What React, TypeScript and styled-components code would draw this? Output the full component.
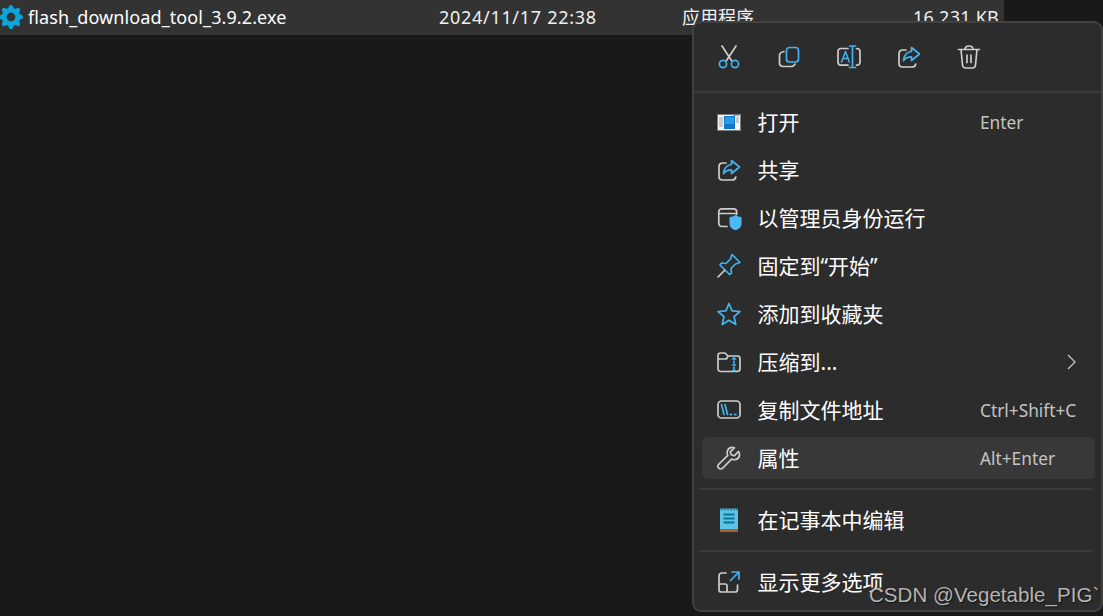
import React from "react";
import styled, { createGlobalStyle } from "styled-components";
import { BsGearFill } from "react-icons/bs";

const ACCENT = "#41b4f0";
const LINE = "#cdcdcd";

const GlobalStyle = createGlobalStyle`
  html, body {
    margin: 0;
    padding: 0;
    height: 100%;
    background: #191919;
    overflow: hidden;
  }
  #root {
    height: 100%;
  }
`;

const Page = styled.div`
  position: relative;
  width: 1103px;
  height: 616px;
  background: #191919;
  color: #fff;
  font-family: "Noto Sans", "Noto Sans CJK SC", sans-serif;
  overflow: hidden;
`;

const FileRow = styled.div`
  display: grid;
  grid-template-columns: 439px 243px 1fr;
  align-items: center;
  width: 1004px;
  height: 35px;
  box-sizing: border-box;
  padding-right: 5px;
  background: #333333;
  font-size: 18px;
  line-height: 35px;
  color: #f0f0f0;
`;

const FileName = styled.div`
  display: flex;
  align-items: center;
  gap: 5px;
  margin-left: -1px;
  color: #fff;
  letter-spacing: 0.1px;
  svg {
    color: #0ba5dc;
    margin-top: -2px;
  }
`;

const FileDate = styled.div`
  letter-spacing: 0.7px;
`;

const FileMeta = styled.div`
  display: flex;
  justify-content: space-between;
`;

const FileSize = styled.div`
  letter-spacing: 0.25px;
`;

const Menu = styled.div`
  position: absolute;
  left: 692px;
  top: 21px;
  width: 411px;
  height: 591px;
  box-sizing: border-box;
  display: flex;
  flex-direction: column;
  background: #2c2c2c;
  border: 2px solid #414141;
  border-radius: 9px;
`;

const Toolbar = styled.div`
  display: flex;
  align-items: center;
  flex: 0 0 68px;
  padding-left: 23px;
  gap: 36px;
  border-bottom: 2px solid #3a3a3a;
`;

const ToolButton = styled.div`
  width: 24px;
  height: 24px;
  svg {
    display: block;
  }
`;

const Rows = styled.div`
  display: flex;
  flex-direction: column;
  gap: 6px;
  padding: 8px 6px 0 8px;
`;

const FooterRows = styled.div`
  display: flex;
  flex-direction: column;
  padding: 0 6px 0 8px;
`;

const Row = styled.div<{ $active?: boolean }>`
  display: grid;
  grid-template-columns: 55.5px 222.5px 1fr;
  align-items: center;
  height: 42px;
  border-radius: 5px;
  background: ${(p) => (p.$active ? "#383838" : "transparent")};
`;

const RowIcon = styled.div`
  padding-left: 15px;
  height: 24px;
  svg {
    display: block;
  }
`;

const Label = styled.div`
  font-size: 21px;
  line-height: 42px;
  color: #fff;
  white-space: nowrap;
`;

const Shortcut = styled.div`
  font-size: 17.3px;
  color: #c4c4c4;
  white-space: nowrap;
`;

const Chevron = styled.div`
  display: flex;
  justify-content: flex-end;
  padding-right: 18px;
`;

const Separator = styled.div`
  height: 2px;
  margin: 9px 3px 9px -3px;
  background: #3a3a3a;
`;

const Watermark = styled.div`
  position: absolute;
  left: 869px;
  top: 581px;
  font-family: "Liberation Sans", sans-serif;
  font-size: 20.5px;
  line-height: 28px;
  letter-spacing: 0.05px;
  color: #b4b4b4;
  text-shadow: 1px 1px 1px rgba(0, 0, 0, 0.55);
  white-space: nowrap;
`;

const Ico: React.FC<{ children: React.ReactNode }> = ({ children }) => (
  <svg width="24" height="24" viewBox="0 0 24 24" fill="none" strokeWidth="1.7" strokeLinecap="round" strokeLinejoin="round">
    {children}
  </svg>
);

const CutIcon = () => (
  <Ico>
    <path d="M5 1l9.5 14.5M19 1L9.5 15.5" stroke={LINE} />
    <circle cx="6" cy="19" r="3.6" stroke={ACCENT} />
    <circle cx="18" cy="19" r="3.6" stroke={ACCENT} />
  </Ico>
);

const CopyIcon = () => (
  <Ico>
    <rect x="9.5" y="2.5" width="12" height="14.5" rx="3" stroke={ACCENT} />
    <path d="M7 6.5C4 7 2.5 8.5 2.5 10.5v7c0 2.5 1.7 4 4 4h7c2.5 0 4-1 4.5-2.5" stroke={LINE} />
  </Ico>
);

const RenameIcon = () => (
  <Ico>
    <path d="M11 3.5H4C2 3.5 1 4.7 1 6.5V17c0 2 1 3.2 3 3.2h7M19.5 3.5c2.2 0 3.5 1.2 3.5 3V17c0 2-1.3 3.2-3.5 3.2" stroke={LINE} />
    <path d="M12.5 1h6M12.500 22.500h6M15.500 1v21.500" stroke={ACCENT} />
    <path d="M4.5 17L8.500 6.500l3.800 10.500M5.800 13.500h5.400" stroke={ACCENT} strokeWidth="1.5" />
  </Ico>
);

const ShareIcon = () => (
  <Ico>
    <path d="M9 5H6C3.5 5 2 6.5 2 8.5v10C2 20.5 3.5 22 5.5 22H15c2 0 3.5-1.2 3.8-3" stroke={LINE} />
    <path d="M14.5 2.5L22.5 9l-8 6.500v-3.700c-3.500 0-6 1-8 3.700.5-5 3.500-8.500 8-9z" stroke={ACCENT} />
  </Ico>
);

const TrashIcon = () => (
  <Ico>
    <path d="M1.5 4.5h21M8 4.5C8 2 9.5 1 12 1s4 1 4 3.5M4 4.5l1.5 15.5c.2 2 1.3 3 3.2 3h6.600c1.900 0 3-1 3.200-3L20 4.500M10 10v7.500M14 10v7.500" stroke={LINE} />
  </Ico>
);

const OpenIcon = () => (
  <svg width="24" height="24" viewBox="0 0 24 24">
    <rect x="0" y="4" width="24" height="17" fill="#7c7c7c" />
    <rect x="1" y="5" width="22" height="15" fill="#f4f4f4" />
    <path d="M2 8h4M2 10h4M2 12h4M2 14h4M2 16h4M19 8h3M19 10h3M19 12h3M16 5.500h6" stroke="#a0a0a0" />
    <rect x="7" y="6" width="11" height="13" fill="#0f78cc" />
    <rect x="8" y="7" width="9" height="7" fill="#2a9ce6" />
  </svg>
);

const AdminIcon = () => (
  <svg width="26" height="24" viewBox="0 0 26 24" fill="none">
    <path d="M10 20.500H5C3 20.500 1.800 19.200 1.800 17.500V6c0-2 1.200-3.200 3.200-3.200h11.500c2 0 3.200 1.200 3.200 3.200v2.500M2 7.500h17.500" stroke={LINE} strokeWidth="1.7" strokeLinecap="round" />
    <path d="M18.500 9c1.700 1.300 3.500 1.800 6 2v6.500c0 3.500-2.500 5.800-6 7-3.500-1.200-6-3.500-6-7V11c2.500-.2 4.300-.7 6-2z" fill="#4cb8f5" />
  </svg>
);

const PinIcon = () => (
  <Ico>
    <path d="M15 1.500L23 9.500l-4.500 1.500-4.500 4.500.5 4.500-2 1.500L3 12l1.500-2 4.500.5 4.500-4.500z" stroke={ACCENT} transform="translate(0 -1)" />
    <path d="M7.500 16.500L1 23" stroke={LINE} />
  </Ico>
);

const StarIcon = () => (
  <Ico>
    <path d="M12 1.500l3.100 7.300 7.900.7-6 5.200 1.800 7.800L12 18.300l-6.800 4.200L7 14.700 1 9.500l7.900-.7z" stroke={ACCENT} />
  </Ico>
);

const ZipIcon = () => (
  <Ico>
    <path d="M1 9V5.500C1 4 2 3 3.500 3H8l3 3h9.500C22.300 6 23 7.200 23 8.500v10c0 2-1 3-3 3H4c-2 0-3-1-3-3V9h8.500L11 6" stroke={LINE} />
    <path d="M17 5.500v2.500M17 11v2M15.500 15h3M17 17v2M15.500 9h3M15.500 20.500h3" stroke={ACCENT} />
  </Ico>
);

const PathIcon = () => (
  <Ico>
    <rect x="1" y="3" width="22" height="17" rx="3.5" stroke={LINE} />
    <path d="M4.500 6.500l2.500 10M8 6.500l2.500 10" stroke={ACCENT} />
    <path d="M13.500 16.500h.8M18 16.500h.8" stroke={ACCENT} strokeWidth="2" />
  </Ico>
);

const WrenchIcon = () => (
  <Ico>
    <path d="M21.500 4.500l-4.300 4.300-3-1-1-3L17.500.8c-3-.8-6 .2-7 3-.6 1.700-.4 3.200.3 4.500L2 17c-1.500 1.500-1.300 3.200-.3 4.200s2.700 1.200 4.200-.3l8.700-8.800c1.300.7 2.800.9 4.500.3 2.800-1 3.800-4 3-7z" stroke={LINE} transform="translate(0 1)" />
  </Ico>
);

const NotepadIcon = () => (
  <svg width="24" height="24" viewBox="0 0 24 24">
    <rect x="3" y="0.500" width="18" height="23" rx="1" fill="#5cc4e8" />
    <rect x="3" y="21" width="18" height="3" fill="#a8612c" />
    <path d="M5 0v2.500M8 0v2.500M11 0v2.500M14 0v2.500M17 0v2.500M20 0v2.500" stroke="#17607f" strokeWidth="1.2" />
    <path d="M6.500 6.500h11M6.500 10.500h11M6.500 14.500h11" stroke="#0f6f98" strokeWidth="1.8" />
  </svg>
);

const MoreIcon = () => (
  <Ico>
    <path d="M9 3H5C3 3 2 4 2 6v14c0 1.500 1 2 2.500 2H18c1.500 0 2.500-.5 2.500-2.500V15M2 14h6c1.500 0 2 .5 2 2v6" stroke={LINE} />
    <path d="M13.500 10.500L21.500 2.500M15 2h7v7" stroke={ACCENT} />
  </Ico>
);

const ChevronIcon = () => (
  <svg width="12" height="18" viewBox="0 0 12 18" fill="none">
    <path d="M3 2l7 7-7 7" stroke="#c4c4c4" strokeWidth="1.3" />
  </svg>
);

const TOOLS = [CutIcon, CopyIcon, RenameIcon, ShareIcon, TrashIcon];

const MAIN_ITEMS = [
  { icon: OpenIcon, label: "打开", shortcut: "Enter" },
  { icon: ShareIcon, label: "共享" },
  { icon: AdminIcon, label: "以管理员身份运行" },
  { icon: PinIcon, label: "固定到“开始”" },
  { icon: StarIcon, label: "添加到收藏夹" },
  { icon: ZipIcon, label: "压缩到...", submenu: true },
  { icon: PathIcon, label: "复制文件地址", shortcut: "Ctrl+Shift+C" },
  { icon: WrenchIcon, label: "属性", shortcut: "Alt+Enter", active: true },
];

interface ItemProps {
  icon: React.FC;
  label: string;
  shortcut?: string;
  submenu?: boolean;
  active?: boolean;
}

const MenuRow: React.FC<ItemProps> = ({ icon: Icon, label, shortcut, submenu, active }) => (
  <Row $active={active}>
    <RowIcon>
      <Icon />
    </RowIcon>
    <Label>{label}</Label>
    {submenu ? (
      <Chevron>
        <ChevronIcon />
      </Chevron>
    ) : (
      <Shortcut>{shortcut}</Shortcut>
    )}
  </Row>
);

export default function App() {
  return (
    <Page>
      <GlobalStyle />
      <FileRow>
        <FileName>
          <BsGearFill size={24} />
          <span>flash_download_tool_3.9.2.exe</span>
        </FileName>
        <FileDate>2024/11/17 22:38</FileDate>
        <FileMeta>
          <span>应用程序</span>
          <FileSize>16 231 KB</FileSize>
        </FileMeta>
      </FileRow>
      <Menu>
        <Toolbar>
          {TOOLS.map((Tool, i) => (
            <ToolButton key={i}>
              <Tool />
            </ToolButton>
          ))}
        </Toolbar>
        <Rows>
          {MAIN_ITEMS.map((item) => (
            <MenuRow key={item.label} {...item} />
          ))}
        </Rows>
        <FooterRows>
          <Separator />
          <MenuRow icon={NotepadIcon} label="在记事本中编辑" />
          <Separator />
          <MenuRow icon={MoreIcon} label="显示更多选项" />
        </FooterRows>
      </Menu>
      <Watermark>CSDN @Vegetable_PIG`</Watermark>
    </Page>
  );
}
